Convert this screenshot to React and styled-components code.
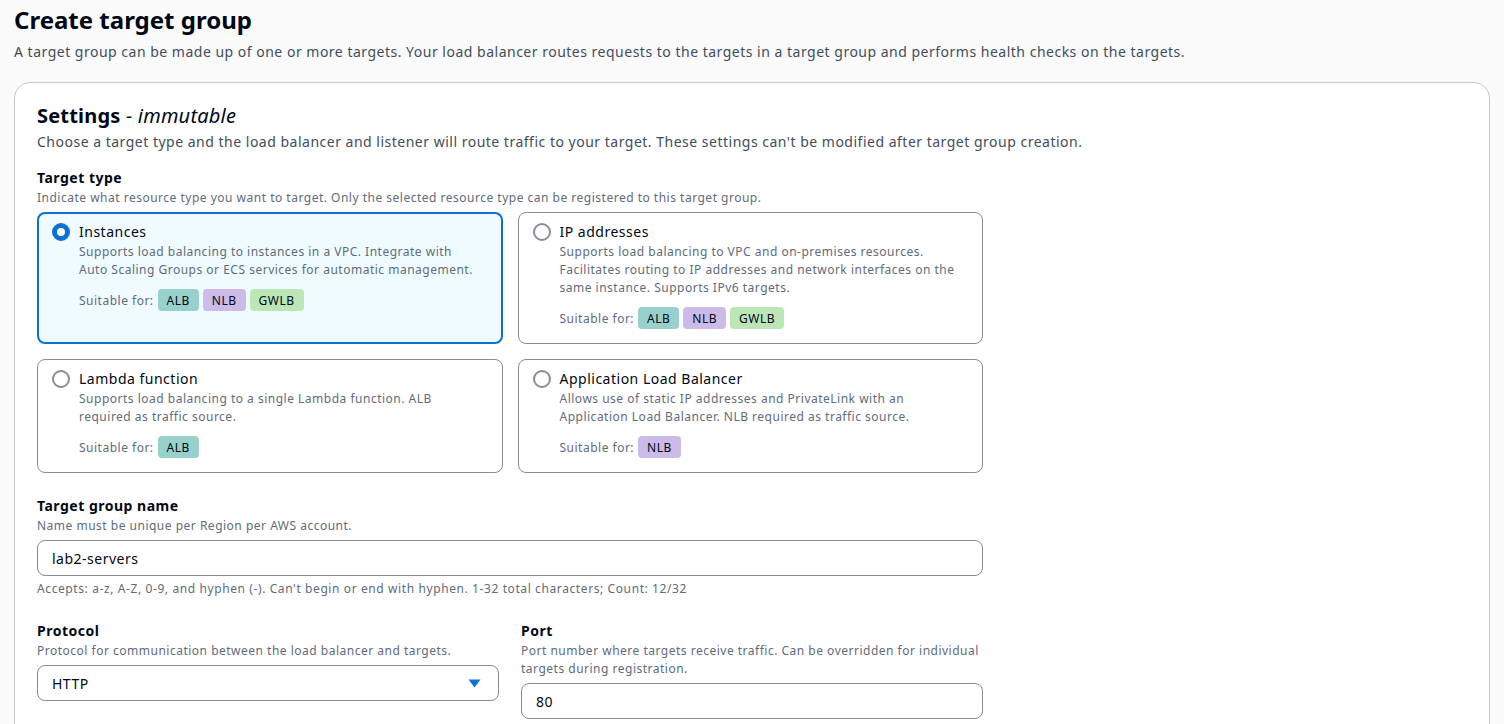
import React from "react";
import styled, { createGlobalStyle } from "styled-components";

const GlobalStyle = createGlobalStyle`
  html, body {
    margin: 0;
    padding: 0;
    background: #fafafa;
    font-family: "Noto Sans", "Open Sans", Arial, sans-serif;
    letter-spacing: 0.5px;
    color: #000716;
  }
`;

const TILES = [
  {
    id: "instances",
    title: "Instances",
    desc: "Supports load balancing to instances in a VPC. Integrate with Auto Scaling Groups or ECS services for automatic management.",
    tags: ["ALB", "NLB", "GWLB"],
    selected: true,
  },
  {
    id: "ip",
    title: "IP addresses",
    desc: "Supports load balancing to VPC and on-premises resources. Facilitates routing to IP addresses and network interfaces on the same instance. Supports IPv6 targets.",
    tags: ["ALB", "NLB", "GWLB"],
  },
  {
    id: "lambda",
    title: "Lambda function",
    desc: "Supports load balancing to a single Lambda function. ALB required as traffic source.",
    tags: ["ALB"],
  },
  {
    id: "alb",
    title: "Application Load Balancer",
    desc: "Allows use of static IP addresses and PrivateLink with an Application Load Balancer. NLB required as traffic source.",
    tags: ["NLB"],
  },
];

const TAG_COLORS = {
  ALB: "#98d1cb",
  NLB: "#ccbae9",
  GWLB: "#bde6b6",
};

export default function App() {
  return (
    <Page>
      <GlobalStyle />
      <Header>
        <Title>Create target group</Title>
        <Lead>
          A target group can be made up of one or more targets. Your load balancer routes requests
          to the targets in a target group and performs health checks on the targets.
        </Lead>
      </Header>

      <Card>
        <CardTitle>
          Settings <Immutable>- immutable</Immutable>
        </CardTitle>
        <CardDesc>
          Choose a target type and the load balancer and listener will route traffic to your
          target. These settings can't be modified after target group creation.
        </CardDesc>

        <Form>
          <Field>
            <Label>Target type</Label>
            <Hint>
              Indicate what resource type you want to target. Only the selected resource type can
              be registered to this target group.
            </Hint>
            <TileGrid>
              {TILES.map((t) => (
                <Tile key={t.id} $selected={t.selected}>
                  <Radio $checked={t.selected} />
                  <TileBody>
                    <TileTitle>{t.title}</TileTitle>
                    <TileDesc>{t.desc}</TileDesc>
                    <Suitable>
                      <span>Suitable for:</span>
                      {t.tags.map((tag) => (
                        <Tag key={tag} $color={TAG_COLORS[tag]}>
                          {tag}
                        </Tag>
                      ))}
                    </Suitable>
                  </TileBody>
                </Tile>
              ))}
            </TileGrid>
          </Field>

          <Field>
            <Label>Target group name</Label>
            <Hint>Name must be unique per Region per AWS account.</Hint>
            <Input defaultValue="lab2-servers" />
            <Constraint>
              Accepts: a-z, A-Z, 0-9, and hyphen (-). Can't begin or end with hyphen. 1-32 total
              characters; Count: 12/32
            </Constraint>
          </Field>

          <TwoCol>
            <Field>
              <Label>Protocol</Label>
              <Hint>Protocol for communication between the load balancer and targets.</Hint>
              <Select>
                <span>HTTP</span>
                <svg width="13" height="9" viewBox="0 0 13 9">
                  <path d="M0.5 0.5h12L6.5 8.5z" fill="#0972d3" />
                </svg>
              </Select>
            </Field>
            <Field>
              <Label>Port</Label>
              <Hint>
                Port number where targets receive traffic. Can be overridden for individual targets
                during registration.
              </Hint>
              <Input defaultValue="80" />
            </Field>
          </TwoCol>
        </Form>
      </Card>
    </Page>
  );
}

const Page = styled.div`
  padding: 4px 14px 40px;
`;

const Header = styled.header`
  margin-bottom: 20px;
`;

const Title = styled.h1`
  margin: 0 0 6px;
  font-size: 24px;
  line-height: 32px;
  font-weight: 700;
  letter-spacing: 0;
  color: #000716;
`;

const Lead = styled.p`
  margin: 0;
  font-size: 14px;
  line-height: 20px;
  color: #414d5c;
`;

const Card = styled.section`
  background: #ffffff;
  border: 1px solid #c6c6cd;
  border-radius: 16px;
  padding: 19px 22px 20px;
`;

const CardTitle = styled.h2`
  margin: 0 0 2px;
  font-size: 20px;
  line-height: 28px;
  font-weight: 700;
  letter-spacing: 0.2px;
`;

const Immutable = styled.span`
  font-style: italic;
  font-weight: 400;
`;

const CardDesc = styled.p`
  margin: 0;
  font-size: 14px;
  line-height: 20px;
  color: #414d5c;
`;

const Form = styled.div`
  width: 946px;
  margin-top: 15px;
  display: flex;
  flex-direction: column;
  gap: 22px;
`;

const Field = styled.div`
  display: flex;
  flex-direction: column;
`;

const Label = styled.div`
  font-size: 14px;
  line-height: 22px;
  font-weight: 700;
  color: #000716;
`;

const Hint = styled.div`
  font-size: 12px;
  line-height: 18px;
  color: #5f6b7a;
`;

const TileGrid = styled.div`
  display: grid;
  grid-template-columns: 1fr 1fr;
  gap: 15px;
  margin-top: 5px;
`;

const Tile = styled.div`
  display: flex;
  gap: 9px;
  border: ${(p) => (p.$selected ? "2px solid #0972d3" : "1px solid #8c8c94")};
  background: ${(p) => (p.$selected ? "#f0fbff" : "#ffffff")};
  border-radius: 8px;
  padding: ${(p) => (p.$selected ? "7px 13px 13px" : "8px 14px 14px")};
`;

const Radio = styled.span`
  flex: none;
  box-sizing: border-box;
  width: 18px;
  height: 18px;
  margin-top: 2px;
  border-radius: 50%;
  border: ${(p) => (p.$checked ? "5px solid #0972d3" : "2px solid #8c8c94")};
  background: #ffffff;
`;

const TileBody = styled.div`
  display: flex;
  flex-direction: column;
`;

const TileTitle = styled.div`
  font-size: 14px;
  line-height: 22px;
  color: #000716;
`;

const TileDesc = styled.div`
  font-size: 12px;
  line-height: 18px;
  color: #5f6b7a;
  padding-right: 8px;
`;

const Suitable = styled.div`
  display: flex;
  align-items: center;
  gap: 5px;
  margin-top: 10px;
  font-size: 12px;
  color: #5f6b7a;

  & > span {
    margin-right: -1px;
  }
`;

const Tag = styled.span`
  display: inline-flex;
  align-items: center;
  height: 22px;
  padding: 0 9px;
  border-radius: 4px;
  background: ${(p) => p.$color};
  color: #000716;
  font-size: 12px;
`;

const Input = styled.input`
  box-sizing: border-box;
  width: 100%;
  height: 36px;
  margin-top: 5px;
  padding: 0 14px;
  border: 1px solid #8c8c94;
  border-radius: 8px;
  font-family: inherit;
  letter-spacing: 0.5px;
  font-size: 14px;
  color: #000716;
  background: #ffffff;
  outline: none;
`;

const Constraint = styled.div`
  margin-top: 4px;
  font-size: 12px;
  line-height: 18px;
  letter-spacing: 0.6px;
  color: #5f6b7a;
`;

const TwoCol = styled.div`
  display: grid;
  grid-template-columns: 1fr 1fr;
  gap: 22px;
  align-items: start;
`;

const Select = styled.div`
  box-sizing: border-box;
  display: flex;
  align-items: center;
  justify-content: space-between;
  height: 36px;
  margin-top: 5px;
  padding: 0 17px 0 14px;
  border: 1px solid #8c8c94;
  border-radius: 8px;
  background: #ffffff;
  font-size: 14px;
  color: #000716;
`;
